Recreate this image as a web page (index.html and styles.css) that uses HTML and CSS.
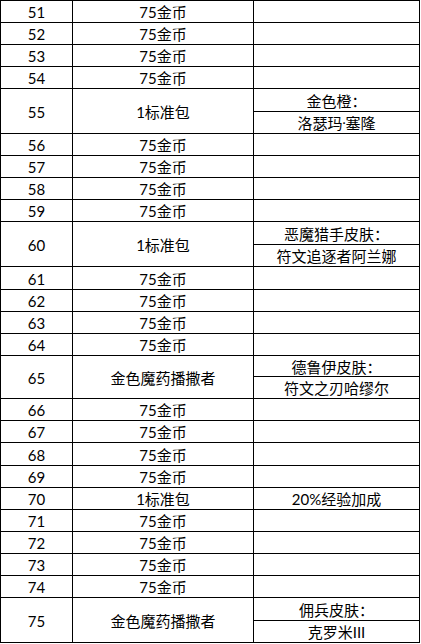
FILE: index.html
```html
<!DOCTYPE html>
<html lang="zh-CN">
<head>
<meta charset="utf-8">
<title>等级奖励</title>
<link rel="stylesheet" href="styles.css">
</head>
<body>
<div class="sheet">
<div class="cell">51</div><div class="cell">75金币</div><div class="cell"></div>
<div class="cell">52</div><div class="cell">75金币</div><div class="cell"></div>
<div class="cell">53</div><div class="cell">75金币</div><div class="cell"></div>
<div class="cell">54</div><div class="cell">75金币</div><div class="cell"></div>
<div class="cell span2">55</div><div class="cell span2">1标准包</div><div class="cell">金色橙：</div>
<div class="cell">洛瑟玛<span class="dot">·</span>塞隆</div>
<div class="cell">56</div><div class="cell">75金币</div><div class="cell"></div>
<div class="cell">57</div><div class="cell">75金币</div><div class="cell"></div>
<div class="cell">58</div><div class="cell">75金币</div><div class="cell"></div>
<div class="cell">59</div><div class="cell">75金币</div><div class="cell"></div>
<div class="cell span2">60</div><div class="cell span2">1标准包</div><div class="cell">恶魔猎手皮肤：</div>
<div class="cell">符文追逐者阿兰娜</div>
<div class="cell">61</div><div class="cell">75金币</div><div class="cell"></div>
<div class="cell">62</div><div class="cell">75金币</div><div class="cell"></div>
<div class="cell">63</div><div class="cell">75金币</div><div class="cell"></div>
<div class="cell">64</div><div class="cell">75金币</div><div class="cell"></div>
<div class="cell span2">65</div><div class="cell span2">金色魔药播撒者</div><div class="cell">德鲁伊皮肤：</div>
<div class="cell">符文之刃哈缪尔</div>
<div class="cell">66</div><div class="cell">75金币</div><div class="cell"></div>
<div class="cell">67</div><div class="cell">75金币</div><div class="cell"></div>
<div class="cell">68</div><div class="cell">75金币</div><div class="cell"></div>
<div class="cell">69</div><div class="cell">75金币</div><div class="cell"></div>
<div class="cell">70</div><div class="cell">1标准包</div><div class="cell">20%经验加成</div>
<div class="cell">71</div><div class="cell">75金币</div><div class="cell"></div>
<div class="cell">72</div><div class="cell">75金币</div><div class="cell"></div>
<div class="cell">73</div><div class="cell">75金币</div><div class="cell"></div>
<div class="cell">74</div><div class="cell">75金币</div><div class="cell"></div>
<div class="cell span2">75</div><div class="cell span2">金色魔药播撒者</div><div class="cell">佣兵皮肤：</div>
<div class="cell">克罗米III</div>
</div>
</body>
</html>
```

FILE: styles.css
```css
html, body {
  margin: 0;
  padding: 0;
  background: #ffffff;
}

.sheet {
  display: grid;
  width: max-content;
  grid-template-columns: 72px 181px 166px;
  grid-template-rows:
    22px 22px 22px 22px
    23px 22px
    22px 22px 22px 22px
    23px 22px
    23px 22px 22px 22px
    21px 22px
    22px 22px 23px 22px 22px 22px 22px 22px 22px
    23px 22px;
  border-top: 1px solid #000000;
  border-left: 1px solid #000000;
  font-family: Lato, "Noto Sans CJK SC", sans-serif;
  font-size: 15px;
  line-height: 16px;
  color: #000000;
}

.cell {
  box-sizing: border-box;
  display: flex;
  align-items: center;
  justify-content: center;
  padding-top: 1px;
  border-right: 1px solid #000000;
  border-bottom: 1px solid #000000;
  white-space: nowrap;
  overflow: hidden;
}

.span2 {
  grid-row: span 2;
}

.dot {
  font-size: 12px;
}
```
